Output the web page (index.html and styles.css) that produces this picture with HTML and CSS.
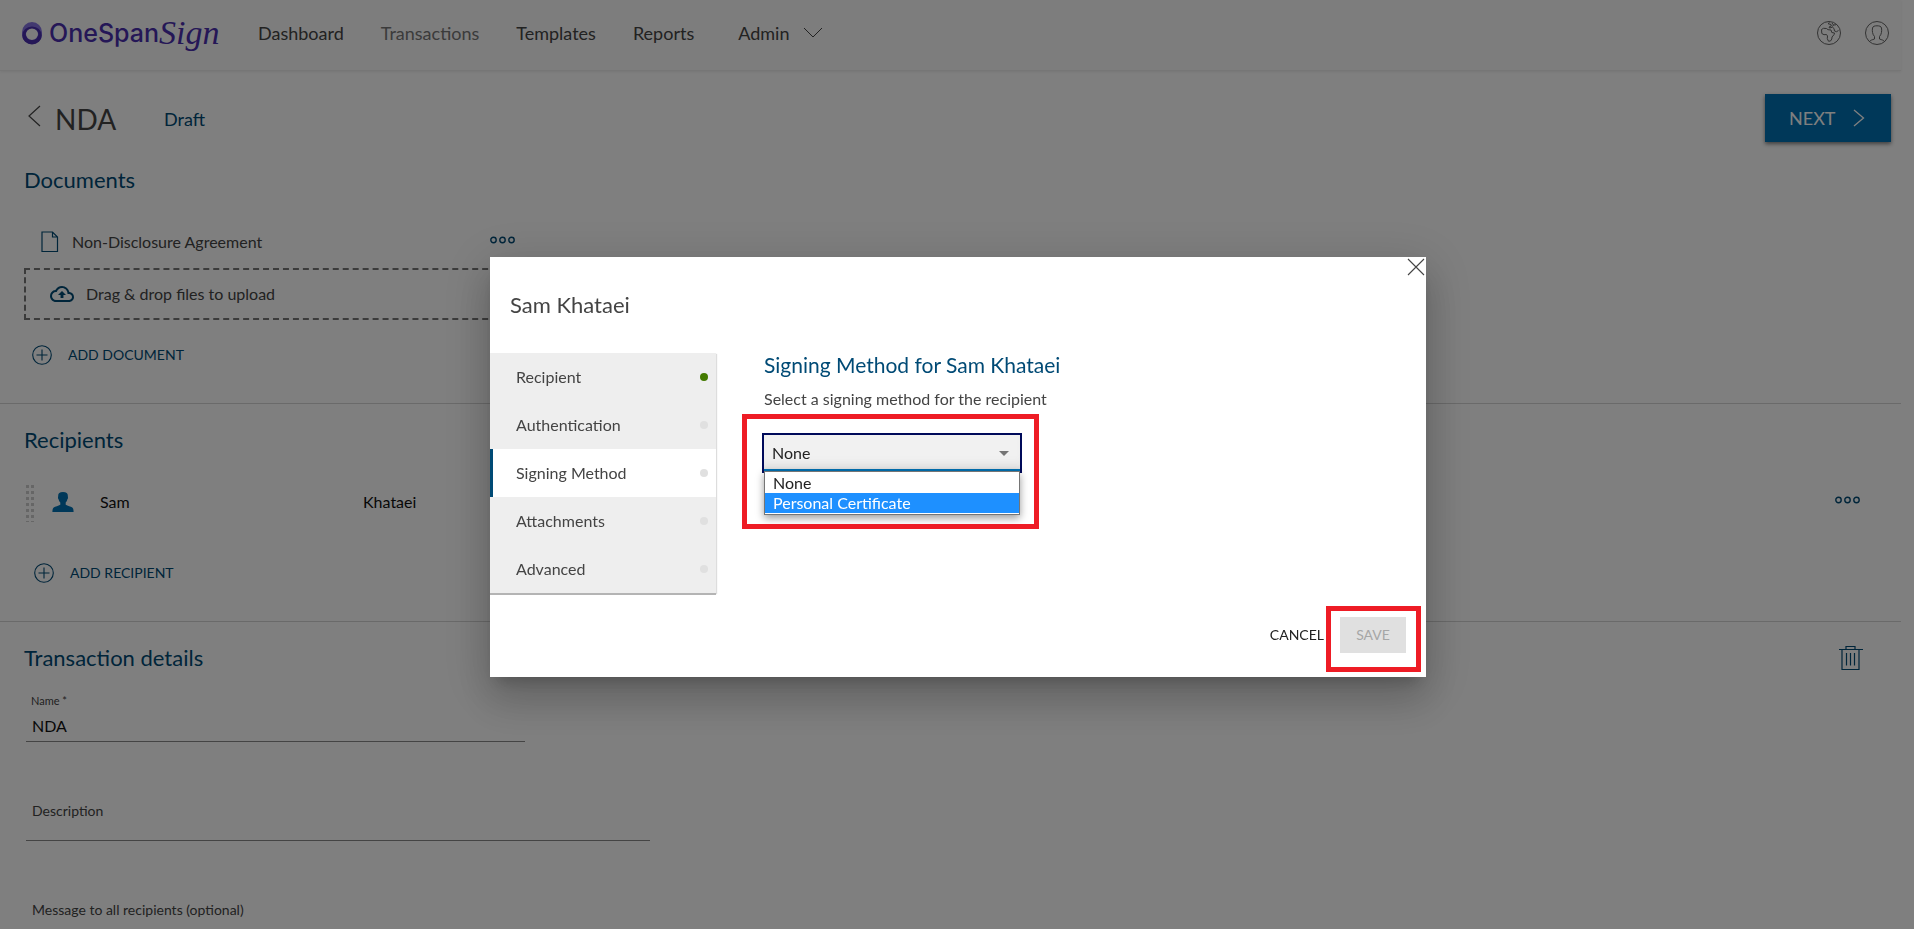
FILE: index.html
```html
<!DOCTYPE html>
<html lang="en">
<head>
<meta charset="utf-8">
<title>OneSpan Sign - NDA</title>
<link rel="stylesheet" href="styles.css">
</head>
<body>
<svg class="sprite" aria-hidden="true">
  <symbol id="more" viewBox="0 0 26 8"><g fill="none" stroke="currentColor" stroke-width="1.400"><circle cx="3.500" cy="4" r="2.700"/><circle cx="12.500" cy="4" r="2.700"/><circle cx="21.500" cy="4" r="2.700"/></g></symbol>
  <symbol id="plus" viewBox="0 0 20 20"><g fill="none" stroke="currentColor" stroke-width="1.1"><circle cx="10" cy="10" r="9.3"/><path d="M10 4.5v11M4.500 10h11"/></g></symbol>
</svg>
<div class="page">
  <header class="topbar">
    <a class="logo" href="#">
      <svg class="logo-mark" viewBox="0 0 20 24" aria-hidden="true">
        <path fill="#8573e0" fill-rule="evenodd" d="M10 1a10 10 0 0 1 10 10v3a10 9 0 0 1-20 0v-3A10 10 0 0 1 10 1zm0 6a6 6 0 1 0 0 12 6 6 0 0 0 0-12z"/>
        <path fill="#4a2fae" fill-rule="evenodd" d="M10 5.500a9.500 9 0 0 1 9.700 9A9.700 9 0 0 1 .3 14.500 9.600 9 0 0 1 10 5.500zm0 2a6.300 5.800 0 1 0 0 11.600A6.300 5.800 0 0 0 10 7.500z"/>
      </svg>
      <span class="logo-name">OneSpan</span><span class="logo-script">Sign</span>
    </a>
    <nav class="nav">
      <a href="#">Dashboard</a>
      <a class="current" href="#">Transactions</a>
      <a href="#">Templates</a>
      <a href="#">Reports</a>
      <button class="admin" type="button">Admin
        <svg width="20" height="12" viewBox="0 0 20 12" fill="none" stroke="currentColor"><path d="M1 1l9 9 9-9"/></svg>
      </button>
    </nav>
    <div class="tools">
      <button type="button" aria-label="Language">
        <svg width="24" height="24" viewBox="0 0 24 24" fill="none" stroke="currentColor"><circle cx="12" cy="12" r="11.500"/><path d="M4.500 8.500L6.500 7.300l3 .2 1.500 1.200 3 .3.800 2.500 2.700.5-.5 1.700-2 2.300-.2 2-1.300 2-2 .2-1.200-2.500.2-2.700-1-1.500-2.500.2-2.200-1.200z"/><path d="M12.500 1.500l-1.500 1.200 3 .8.300 1.500-2.300 1 .5 1 3-.8 1.500 1.300.5 2.500 2 .7 2-1.200M15 2l1.500 2 2.500-.2M16.500 4l-1 1.500"/></svg>
      </button>
      <button type="button" aria-label="Account">
        <svg width="24" height="24" viewBox="0 0 24 24" fill="none" stroke="currentColor"><circle cx="12" cy="12" r="11.500"/><path d="M4.500 20.500c1-1.500 2.500-1.500 5-2.500v-2.500C7.500 13.500 7 10 7.500 7c.5-1.800 2-2.200 4.500-2.200s4 .4 4.500 2.200c.5 3 0 6.500-2 8.500V18c2.500 1 4 1 5 2.500"/></svg>
      </button>
    </div>
  </header>
  <main>
    <div class="titlebar">
      <a class="back" href="#" aria-label="Back"><svg width="13" height="22" viewBox="0 0 13 22" fill="none" stroke="currentColor" stroke-width="1.200"><path d="M12 1L1 11l11 10"/></svg></a>
      <h1>NDA</h1>
      <span class="status">Draft</span>
      <button class="next" type="button">NEXT
        <svg width="12" height="18" viewBox="0 0 12 18" fill="none" stroke="currentColor" stroke-width="1.300"><path d="M1 1l9.500 8L1 17"/></svg>
      </button>
    </div>
    <section class="section">
      <h2>Documents</h2>
      <div class="documents">
        <div class="doc-row">
          <svg width="18" height="22" viewBox="0 0 18 22" fill="none" stroke="currentColor" stroke-width="1.200"><path d="M1 1h10.500L16.500 6v14.500H1zM11.500 1v5h5"/></svg>
          <span class="doc-name">Non-Disclosure Agreement</span>
          <button class="more" type="button" aria-label="Document actions"><svg width="26" height="8"><use href="#more"/></svg></button>
        </div>
        <div class="dropzone">
          <svg width="24" height="16" viewBox="0 4 24 16" fill="currentColor"><path d="M19.350 10.040A7.490 7.490 0 0 0 12 4C9.110 4 6.600 5.640 5.350 8.040A5.994 5.994 0 0 0 0 14c0 3.310 2.690 6 6 6h13c2.760 0 5-2.240 5-5 0-2.640-2.050-4.780-4.650-4.960zM19 18H6c-2.210 0-4-1.790-4-4s1.790-4 4-4h.710C7.370 7.690 9.480 6 12 6c3.040 0 5.500 2.460 5.500 5.500v.5H19c1.660 0 3 1.340 3 3s-1.340 3-3 3zM8 13h2.550v3h2.900v-3H16l-4-4z"/></svg>
          <span>Drag &amp; drop files to upload</span>
        </div>
      </div>
      <button class="add add-document" type="button"><svg width="20" height="20"><use href="#plus"/></svg>ADD DOCUMENT</button>
    </section>
    <section class="section">
      <h2>Recipients</h2>
      <div class="recipient">
        <span class="handle"></span>
        <svg class="person" width="22" height="20" viewBox="0 0 22 20" fill="currentColor"><path d="M11 0c3.500 0 4.800 1.500 4.800 3.500 0 1 .2 1.200.2 2.300 0 1-.6 1.300-.8 2.200-.3 1.300-.9 2-1.500 2.500v2.300c2 1.200 5 1.600 6.600 2.800 1.100.9 1.300 2.700 1.300 4.400H.4c0-1.700.2-3.500 1.300-4.400 1.600-1.200 4.600-1.600 6.600-2.800v-2.300C7.700 10 7.100 9.300 6.800 8 6.600 7.100 6 6.800 6 5.800c0-1.100.2-1.300.2-2.300C6.200 1.500 7.500 0 11 0z"/></svg>
        <span class="first-name">Sam</span>
        <span class="last-name">Khataei</span>
        <button class="more" type="button" aria-label="Recipient actions"><svg width="26" height="8"><use href="#more"/></svg></button>
      </div>
      <button class="add add-recipient" type="button"><svg width="20" height="20"><use href="#plus"/></svg>ADD RECIPIENT</button>
    </section>
    <section class="section">
      <div class="details-head">
        <h2>Transaction details</h2>
        <button class="trash" type="button" aria-label="Delete transaction"><svg width="24" height="26" viewBox="0 0 24 26" fill="none" stroke="currentColor" stroke-width="1.200"><path d="M0 4.500h24M7 4.500v-3h9v3M3 4.500v20h17v-20M7.500 8v12.500M11.500 8v12.500M15.500 8v12.500"/></svg></button>
      </div>
      <div class="field name">
        <label for="name">Name *</label>
        <input id="name" type="text" value="NDA">
      </div>
      <div class="field">
        <label for="description">Description</label>
        <textarea id="description" rows="1"></textarea>
      </div>
      <div class="field">
        <label for="message">Message to all recipients (optional)</label>
        <textarea id="message" rows="1"></textarea>
      </div>
    </section>
  </main>
</div>
<div class="backdrop">
  <div class="dialog" role="dialog" aria-labelledby="dialog-title">
    <button class="close" type="button" aria-label="Close"><svg width="18" height="18" viewBox="0 0 18 18" fill="none" stroke="currentColor" stroke-width="1.100"><path d="M1 1l16 16M17 1L1 17"/></svg></button>
    <h2 id="dialog-title" class="dialog-title">Sam Khataei</h2>
    <div class="dialog-body">
      <nav class="tabs">
        <button class="tab done" type="button">Recipient</button>
        <button class="tab" type="button">Authentication</button>
        <button class="tab active" type="button">Signing Method</button>
        <button class="tab" type="button">Attachments</button>
        <button class="tab" type="button">Advanced</button>
      </nav>
      <div class="method">
        <h3>Signing Method for Sam Khataei</h3>
        <label for="method">Select a signing method for the recipient</label>
        <div class="picker">
          <select id="method"><option>None</option><option>Personal Certificate</option></select>
          <svg class="arrow" width="10" height="5" viewBox="0 0 10 5" fill="#757575"><path d="M0 0h10L5 5z"/></svg>
          <ul class="options" role="listbox">
            <li role="option">None</li>
            <li role="option" aria-selected="true">Personal Certificate</li>
          </ul>
          <span class="mark mark-picker"></span>
        </div>
      </div>
    </div>
    <div class="dialog-actions">
      <button class="cancel" type="button">CANCEL</button>
      <span class="save-wrap"><button class="save" type="button" disabled>SAVE</button><span class="mark mark-save"></span></span>
    </div>
  </div>
</div>
</body>
</html>
```

FILE: styles.css
```css
* { box-sizing: border-box; }
body {
  margin: 0;
  height: 100vh;
  overflow: hidden;
  background: #fff;
  color: #444;
  font: 16px/24px Lato, "Open Sans", sans-serif;
}
h1, h2, h3, ul { margin: 0; padding: 0; font-weight: 400; list-style: none; }
a { color: inherit; text-decoration: none; }
button, input, textarea, select { font: inherit; color: inherit; }
button { display: flex; align-items: center; padding: 0; border: 0; background: none; }
svg { display: block; flex: none; }
.sprite { position: absolute; width: 0; height: 0; }
.page { padding-right: 13px; }

/* Top bar */
.topbar {
  display: flex;
  align-items: center;
  height: 71px;
  padding: 0 12px 5px 22px;
  border-bottom: 1px solid #ececec;
  background: #fafafa;
  box-shadow: 0 1px 3px rgba(0, 0, 0, .08);
}
.logo { display: flex; align-items: center; width: 236px; color: #4a2fae; }
.logo-mark { width: 20px; height: 24px; margin-right: 7px; }
.logo-name { font: 500 25px/30px Inter, sans-serif; }
.logo-script { font: italic 34px/30px "Liberation Serif", serif; }
.nav { display: flex; align-items: center; gap: 37px; font-size: 18px; }
.nav .current { color: #777; }
.admin { gap: 14px; margin-left: 7px; }
.tools { display: flex; gap: 24px; margin-left: auto; color: #666; }

/* Title row */
.titlebar { display: flex; align-items: center; height: 50px; margin-top: 23px; padding: 0 10px 0 28px; }
.back { width: 27px; padding-bottom: 6px; }
h1 { font-size: 28px; line-height: 36px; }
.status { margin-left: 48px; font-size: 18px; color: #004a75; }
.next {
  align-self: flex-start;
  justify-content: space-between;
  width: 126px;
  height: 48px;
  margin-left: auto;
  padding: 0 26px 0 24px;
  background: #0071b3;
  color: #fff;
  font-size: 18px;
  box-shadow: 0 2px 4px rgba(0, 0, 0, .5);
}

/* Sections */
.section { padding: 22px 0 30px 24px; border-bottom: 1px solid #d4d4d4; }
.section:last-child { border-bottom: 0; }
.section h2 { font-size: 22px; line-height: 28px; color: #004a75; }
.documents { width: 504px; margin-top: 24px; }
.doc-row { display: flex; align-items: center; height: 50px; padding: 0 12px 2px 17px; }
.doc-row > svg { color: #004a75; }
.doc-name { margin-left: 13px; }
.more { color: #004a75; margin-left: auto; padding-bottom: 5px; }
.dropzone {
  display: flex;
  align-items: center;
  gap: 12px;
  height: 52px;
  padding-left: 24px;
  border: 2px dashed #777;
}
.dropzone svg { color: #004a75; }
.add { gap: 16px; height: 36px; color: #004a75; font-size: 14px; }
.add-document { margin: 17px 0 0 8px; }
.add-recipient { margin: 29px 0 0 10px; }
.recipient { display: flex; align-items: center; height: 48px; margin-top: 24px; padding-right: 40px; }
.handle {
  width: 8px;
  height: 40px;
  margin: 0 18px 0 2px;
  background-image: linear-gradient(#fff 50%, transparent 50%), linear-gradient(90deg, #ccc 3px, #fff 3px, #fff 5px, #ccc 5px);
  background-size: 8px 6px, 8px 6px;
}
.person { color: #0071b3; }
.first-name { width: 263px; margin-left: 26px; color: #111; }
.last-name { color: #111; }
.details-head { display: flex; justify-content: space-between; padding-right: 38px; }
.trash { color: #004a75; }
.field { display: flex; flex-direction: column; width: 624px; margin: 59px 0 0 2px; }
.field label { padding-left: 6px; font-size: 14px; line-height: 20px; }
.field textarea { height: 20px; padding: 0; border: 0; border-bottom: 1px solid #888; background: none; resize: none; }
.field.name { width: 499px; margin-top: 21px; }
.name label { padding-left: 5px; font-size: 11px; line-height: 16px; }
.name input { height: 33px; padding: 0 6px; border: 0; border-bottom: 1px solid #888; background: none; color: #111; }

/* Dialog */
.backdrop {
  position: fixed;
  inset: 0;
  display: flex;
  align-items: center;
  justify-content: center;
  padding: 5px 0 0 2px;
  background: rgba(0, 0, 0, .5);
}
.dialog {
  position: relative;
  width: 936px;
  padding: 34px 20px 24px 0;
  background: #fff;
  box-shadow: 0 11px 15px -7px rgba(0, 0, 0, .2), 0 24px 38px 3px rgba(0, 0, 0, .14), 0 9px 46px 8px rgba(0, 0, 0, .12);
}
.close { position: absolute; top: 1px; right: 1px; }
.dialog-title { padding-left: 20px; font-size: 22px; line-height: 28px; }
.dialog-body { display: flex; gap: 48px; margin-top: 34px; }
.tabs { width: 226px; box-shadow: 0 2px 0 #b4b4b4, 1px 1px 1px #ddd; }
.tab {
  justify-content: space-between;
  width: 100%;
  height: 48px;
  padding: 0 8px 0 23px;
  border-left: 3px solid #eee;
  background: #eee;
}
.tab::after { content: ""; width: 8px; height: 8px; border-radius: 50%; background: #e0e0e0; }
.done::after { background: #437a00; }
.active { background: #fff; border-left-color: #004a75; }
.method h3 { font-size: 21px; line-height: 24px; color: #004a75; }
.method label { display: block; margin-top: 10px; }
.picker { position: relative; width: 260px; margin: 22px 0 0 -2px; }
select {
  display: block;
  appearance: none;
  width: 100%;
  height: 40px;
  padding: 0 8px;
  border: 2px solid #000a5a;
  border-radius: 0;
  background: #f1f1f1;
  box-shadow: inset 0 -2px #0071b3, inset 0 -12px 10px -6px #ddd;
  color: #222;
}
.arrow { position: absolute; top: 18px; right: 13px; }
.options {
  position: absolute;
  top: 38px;
  left: 2px;
  right: 2px;
  padding: 1px 0;
  border: 1px solid #757575;
  background: #fff;
  box-shadow: 0 3px 8px rgba(0, 0, 0, .4);
  color: #222;
  line-height: 20px;
}
.options li { padding-left: 8px; }
.options [aria-selected] { background: #1e90ff; color: #fff; }
.mark { position: absolute; border: 5px solid #ee1c25; pointer-events: none; }
.mark-picker { inset: -19px -17px -56px -20px; }
.dialog-actions { display: flex; align-items: center; justify-content: flex-end; gap: 16px; margin-top: 24px; font-size: 14px; }
.cancel { color: #222; }
.save-wrap { position: relative; }
.save { justify-content: center; width: 66px; height: 36px; background: #e0e0e0; color: #a6a6a6; }
.mark-save { inset: -11px -15px -19px -14px; }
```
